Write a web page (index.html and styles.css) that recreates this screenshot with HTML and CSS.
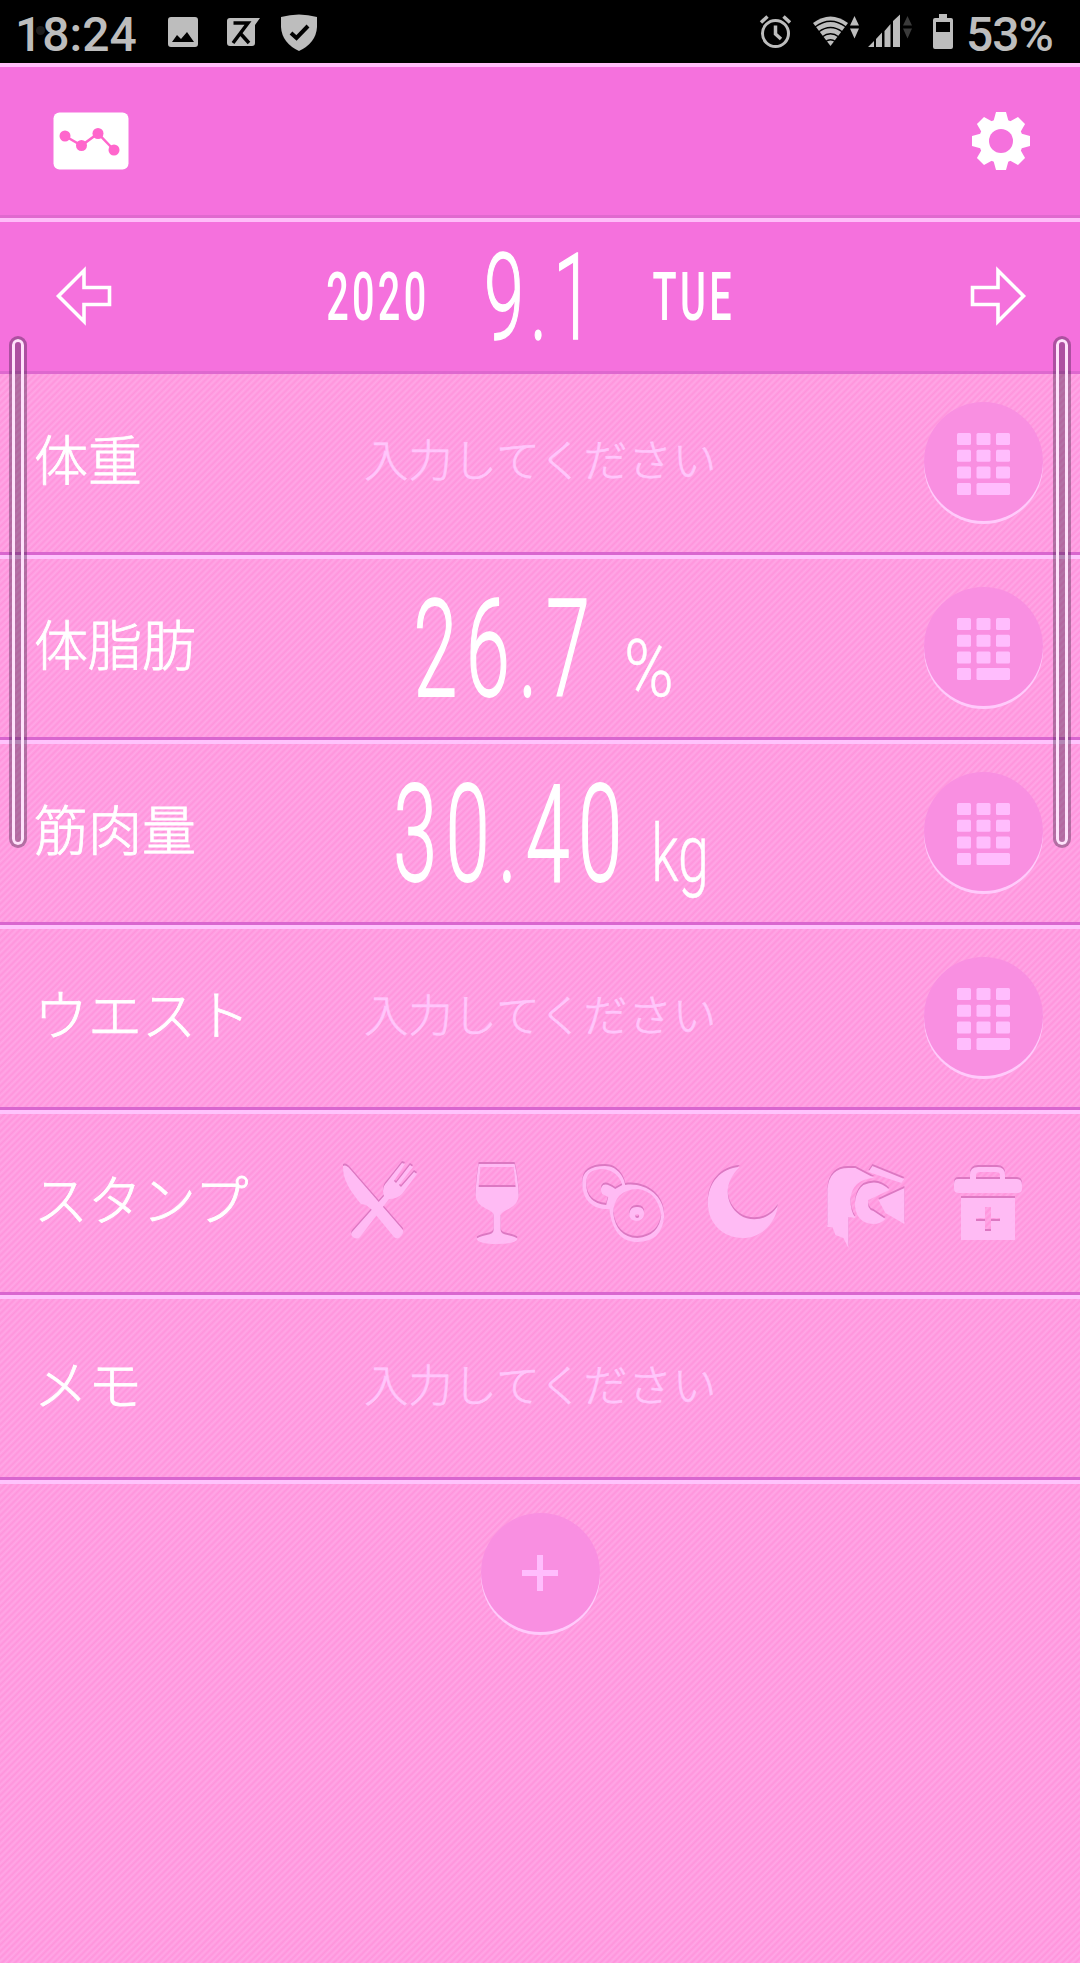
FILE: index.html
```html
<!DOCTYPE html>
<html lang="ja">
<head>
    <meta charset="UTF-8">
    <meta name="viewport" content="width=device-width, initial-scale=1.0">
    <title>体重記録</title>
    <link rel="stylesheet" href="styles.css">
</head>
<body>
    <!-- Shapes shared by several rows -->
    <svg class="defs" width="0" height="0">
        <defs>
            <symbol id="keypad" viewBox="0 0 54 62">
                <rect x="0" y="0" width="14" height="12" rx="1.5"/>
                <rect x="19.5" y="0" width="14" height="12" rx="1.5"/>
                <rect x="39" y="0" width="14" height="12" rx="1.5"/>
                <rect x="0" y="16.7" width="14" height="12" rx="1.5"/>
                <rect x="19.5" y="16.7" width="14" height="12" rx="1.5"/>
                <rect x="39" y="16.7" width="14" height="12" rx="1.5"/>
                <rect x="0" y="33.4" width="14" height="12" rx="1.5"/>
                <rect x="19.5" y="33.4" width="14" height="12" rx="1.5"/>
                <rect x="39" y="33.4" width="14" height="12" rx="1.5"/>
                <rect x="0" y="50" width="14" height="12" rx="1.5"/>
                <rect x="19.5" y="50" width="33.5" height="12" rx="1.5"/>
            </symbol>
            <symbol id="arrow" viewBox="0 0 58 60">
                <path d="M3.5 30 L29 4.500 V21.500 H54.500 V38.500 H29 V55.500 Z" fill="none" stroke="#fff" stroke-width="3.6"/>
            </symbol>
        </defs>
    </svg>

    <div class="status-bar">
        <span class="camera-dot"></span>
        <span class="clock">18:24</span>
        <svg class="status-left" width="160" height="63" viewBox="160 0 160 63" fill="#bdbdbd">
            <path fill-rule="evenodd" d="M171 17 H195 Q198 17 198 20 V44 Q198 47 195 47 H171 Q168 47 168 44 V20 Q168 17 171 17 Z M172 42 H194 L187 32 L181 39 L177 35 Z"/>
            <path d="M230 18 H260 L255 25 V43 Q255 46 252 46 H230 Q227 46 227 43 V21 Q227 18 230 18 Z"/>
            <path d="M233.500 23 H248 L233 43 M240 33 L249 43" fill="none" stroke="#000" stroke-width="3.500"/>
            <path d="M281 17 Q299 12 317 17 V27 Q316 43 299 51 Q282 43 281 27 Z"/>
            <path d="M291 33 L296.500 38 L308 26" fill="none" stroke="#000" stroke-width="4"/>
        </svg>
        <svg class="status-right" width="205" height="63" viewBox="755 0 205 63" fill="#bdbdbd">
            <g fill="none" stroke="#bdbdbd">
                <circle cx="775.500" cy="33.500" r="13" stroke-width="3"/>
                <path d="M775.500 25.500 V34 L781 39 M761 22.500 L767.500 16.500 M790 22.500 L783.500 16.500" stroke-width="3.500"/>
            </g>
            <path d="M813 23 Q830.500 10 848 23 L830.500 46 Z"/>
            <path d="M815 27 Q830.500 15.500 846 27 M818.500 32 Q830.500 23 842.500 32 M822 37 Q830.500 30.500 839 37 M825.500 41.500 Q830.500 38 835.500 41.500" fill="none" stroke="#000" stroke-width="1.300"/>
            <path d="M854.500 16 L859 25.500 H850 Z M850 28.500 H859 L854.500 38.500 Z"/>
            <path d="M868 47 L874 41 V47 Z M876 47 V39 L882 32.500 V47 Z M884.500 47 V31 L890.500 24 V47 Z M893 47 V21 L900 14.500 V47 Z"/>
            <path d="M907.500 16 L912 25.500 H903 Z M903 28.500 H912 L907.500 38.500 Z" fill="#3b3b3b"/>
            <path fill-rule="evenodd" d="M939 14 H947 V18 H951 Q953 18 953 20 V47 Q953 49 951 49 H935 Q933 49 933 47 V20 Q933 18 935 18 H939 Z M936 22 V32 H950 V22 Z"/>
        </svg>
        <span class="battery">53%</span>
    </div>

    <div class="toolbar">
        <svg width="76" height="58" viewBox="0 0 76 58">
            <rect x="0.500" y="0.500" width="75" height="57" rx="6" fill="#fff"/>
            <path d="M12 24 L28.500 33.500 L45 21.500 L61 38" fill="none" stroke="#ff66cc" stroke-width="2.500"/>
            <g fill="#ff66cc">
                <circle cx="12" cy="24" r="5.500"/>
                <circle cx="28.500" cy="33.500" r="5.500"/>
                <circle cx="45" cy="21.500" r="5.500"/>
                <circle cx="61" cy="38" r="5.500"/>
            </g>
        </svg>
        <svg width="58" height="58" viewBox="-29 -29 58 58">
            <g fill="#fff">
                <path id="tooth" d="M-8 -18 L-5 -29 H5 L8 -18 V18 L5 29 H-5 L-8 18 Z"/>
                <use href="#tooth" transform="rotate(45)"/>
                <use href="#tooth" transform="rotate(90)"/>
                <use href="#tooth" transform="rotate(135)"/>
                <circle r="22"/>
            </g>
            <circle r="12" fill="#f571dd"/>
        </svg>
    </div>

    <div class="date-bar">
        <svg width="58" height="60"><use href="#arrow"/></svg>
        <div class="date">
            <span class="date-side">2020</span>
            <span class="date-day">9.1</span>
            <span class="date-side">TUE</span>
        </div>
        <svg class="flip" width="58" height="60"><use href="#arrow"/></svg>
    </div>

    <div class="row">
        <span class="label">体重</span>
        <span class="placeholder">入力してください</span>
        <span class="round"><svg width="54" height="62"><use href="#keypad"/></svg></span>
    </div>
    <div class="row">
        <span class="label">体脂肪</span>
        <div class="reading"><span class="number">26.7</span><span class="unit percent">%</span></div>
        <span class="round"><svg width="54" height="62"><use href="#keypad"/></svg></span>
    </div>
    <div class="row">
        <span class="label">筋肉量</span>
        <div class="reading"><span class="number">30.40</span><span class="unit kilo">kg</span></div>
        <span class="round"><svg width="54" height="62"><use href="#keypad"/></svg></span>
    </div>
    <div class="row">
        <span class="label">ウエスト</span>
        <span class="placeholder">入力してください</span>
        <span class="round"><svg width="54" height="62"><use href="#keypad"/></svg></span>
    </div>
    <div class="row">
        <span class="label">スタンプ</span>
        <div class="stamps">
            <!-- knife and fork -->
            <svg width="86" height="90" viewBox="337 1158 86 90">
                <path d="M343 1165 Q346 1163 350 1168 L377 1199 L403 1229 Q404 1233 399 1237 Q396 1238 394 1236 L371 1208 L366 1204 L361 1203 C351 1191 342 1178 343 1165 Z"/>
                <path d="M352 1231 L384 1195 Q381 1187 387 1181 L402 1162 L405 1163 L394 1180 L396 1182 L410 1164 L413 1166 L399 1184 L401 1186 L414 1171 L417 1173 L402 1193 Q397 1198 389 1198 L360 1236 Q357 1239 353 1236 Q350 1234 352 1231 Z"/>
            </svg>
            <!-- wine glass -->
            <svg width="86" height="90" viewBox="458.400 1158 86 90">
                <path fill-rule="evenodd" d="M479 1163 H515 C518 1176 519 1187 519 1194 Q519 1203 509 1208 Q502 1211 501 1214 V1229 Q501 1233 508 1234 Q517 1236 518 1238 Q516 1243 497 1243 Q479 1243 477 1238 Q478 1236 487 1234 Q494 1233 494 1229 V1214 Q494 1211 487 1208 Q476 1203 476 1194 C476 1187 477 1176 479 1163 Z M481 1166 L479 1186 H516 L514 1166 Z"/>
            </svg>
            <!-- dumbbell -->
            <svg width="86" height="90" viewBox="579.800 1158 86 90">
                <path fill-rule="evenodd" d="M605 1165 C617 1165 624 1176 625 1184 C643 1181 664 1193 664 1215 Q662 1241 637 1241 C623 1241 612 1232 609 1208 C595 1209 582 1201 582 1182 Q582 1165 605 1165 Z M603 1168 Q585 1168 586 1183 Q586 1202 606 1204 L608 1196 L602 1193 Q599 1187 603 1184 Q607 1182 615 1188 L622 1184 Q618 1170 603 1168 Z M637 1188 Q614 1189 613 1212 Q616 1236 637 1237 Q659 1235 661 1214 Q657 1190 637 1188 Z"/>
                <path fill-rule="evenodd" d="M636 1206 Q644 1205 644 1213 Q643 1220 636 1220 Q629 1219 629 1213 Q630 1206 636 1206 Z M637 1213 A2 2 0 1 0 637 1217 A2 2 0 1 0 637 1213 Z"/>
            </svg>
            <!-- moon -->
            <svg width="86" height="90" viewBox="701.200 1158 86 90">
                <path d="M740 1166 C722 1183 726 1204 740 1214 C752 1222 769 1219 778 1205 C775 1225 759 1237 743 1237 C723 1237 708 1222 708 1202 C708 1182 721 1167 740 1166 Z"/>
            </svg>
            <!-- toilet roll -->
            <svg width="86" height="90" viewBox="822.600 1158 86 90">
                <path d="M827 1226 V1188 Q829 1167 848 1167 H855 L874 1177 Q852 1178 850 1198 Q850 1210 855 1217 L848 1216 V1247 L843 1237 L835 1234 L832 1226 Z"/>
                <path d="M872 1165 L904 1178 L901 1182 L868 1171 Z"/>
                <path d="M889 1189 L868 1199 Q866 1208 873 1210 L885 1218 C878 1226 862 1224 857 1214 C852 1204 855 1190 863 1184 Q878 1177 889 1189 Z"/>
                <path d="M904 1187 L878 1199 L885 1212 L904 1223 Z"/>
            </svg>
            <!-- medicine box -->
            <svg width="86" height="90" viewBox="943 1158 86 90">
                <path fill-rule="evenodd" d="M957 1178 H969 V1174 Q969 1166 977 1166 H996 Q1004 1166 1004 1174 V1178 H1016 Q1021 1178 1021 1184 V1188 Q1021 1192 1016 1192 H958 Q953 1192 953 1188 V1183 Q953 1178 957 1178 Z M975 1178 H999 V1173 Q998 1171 995 1171 H979 Q975 1171 975 1174 Z"/>
                <path fill-rule="evenodd" d="M960 1197 H1014 V1239 H960 Z M984 1206 V1217 H975 V1220 H984 V1230 H990 V1220 H999 V1217 H990 V1206 Z"/>
            </svg>
        </div>
    </div>
    <div class="row">
        <span class="label">メモ</span>
        <span class="placeholder">入力してください</span>
    </div>

    <div class="add">
        <span class="round"><svg width="36" height="36"><path d="M15 0 H21 V15 H36 V21 H21 V36 H15 V21 H0 V15 H15 Z"/></svg></span>
    </div>

    <div class="handle handle-left"></div>
    <div class="handle handle-right"></div>
</body>
</html>
```
FILE: styles.css
```css
* {
    box-sizing: border-box;
}
body {
    margin: 0;
    min-height: 1963px;
    position: relative;
    overflow-x: hidden;
    color: #fff;
    font-family: "Noto Sans CJK JP", sans-serif;
    background: repeating-linear-gradient(135deg, #ff94dc 0, #ffa7e6 2.3px, #ff94dc 4.6px);
}
svg {
    display: block;
    flex-shrink: 0;
}
.defs {
    position: absolute;
}

/* Phone status bar */
.status-bar {
    height: 63px;
    display: flex;
    align-items: center;
    position: relative;
    background: #000;
    color: #bdbdbd;
    font-family: Roboto, sans-serif;
    font-size: 48px;
    font-weight: 500;
    line-height: 63px;
    padding: 5px 27px 0 15px;
}
.status-bar svg {
    margin-top: -5px;
}
.camera-dot {
    position: absolute;
    left: 36px;
    top: 26px;
    width: 9px;
    height: 9px;
    border-radius: 50%;
    background: #1d1d1d;
}
.clock {
    width: 145px;
    position: relative;
}
.status-right {
    margin-left: auto;
}
.battery {
    width: 93px;
    padding-left: 6px;
    letter-spacing: -1px;
}

/* Header */
.toolbar {
    height: 155px;
    display: flex;
    justify-content: space-between;
    align-items: center;
    padding: 0 50px 1px 53px;
    background: #f571dd;
    border-top: 4px solid #ffbdf6;
    border-bottom: 3px solid #e069cf;
}
.date-bar {
    height: 156px;
    display: flex;
    justify-content: space-between;
    align-items: center;
    padding: 0 53px 2px 55px;
    background: #f571dd;
    border-top: 4px solid #ffbdf9;
    border-bottom: 3px solid #de68cf;
}
.flip {
    transform: scaleX(-1);
}
.date {
    display: flex;
    align-items: center;
    white-space: nowrap;
    font-family: Roboto, sans-serif;
    line-height: 140px;
    transform: translate(-10px, 2px) scaleX(0.6);
}
.date-side {
    font-size: 66px;
    font-weight: 500;
    letter-spacing: 5.500px;
}
.date-day {
    font-size: 120px;
    font-weight: 300;
    letter-spacing: 10px;
    margin: 0 89px 0 91px;
    -webkit-text-stroke: 1.500px #fff;
}

/* Rows */
.row {
    height: 185px;
    display: grid;
    grid-template-columns: 314px 452px 314px;
    grid-template-rows: 100%;
    align-items: center;
    border-bottom: 4px solid #ffc3fc;
    box-shadow: inset 0 -3px 0 #d966cf;
    padding-bottom: 3px;
}
.label {
    padding-left: 34px;
    font-size: 54px;
    font-weight: 300;
    line-height: 80px;
    margin-top: -11px;
    white-space: nowrap;
    -webkit-text-stroke: 0.800px #fff;
}
.placeholder {
    text-align: center;
    font-size: 44px;
    font-weight: 300;
    line-height: 66px;
    letter-spacing: 0.400px;
    margin: -11px 0 0 1px;
    white-space: nowrap;
    color: #ffc6fb;
    -webkit-text-stroke: 0.600px #ffc6fb;
}
.reading {
    display: flex;
    justify-content: center;
    align-items: baseline;
    white-space: nowrap;
    font-family: Roboto, sans-serif;
    font-weight: 300;
    line-height: 140px;
    padding-top: 22px;
    transform: scaleX(0.58);
}
.number {
    font-size: 136px;
    letter-spacing: 15px;
    -webkit-text-stroke: 1.800px #fff;
}
.unit {
    font-size: 80px;
    transform-origin: left;
    -webkit-text-stroke: 0.500px #fff;
}
.percent {
    margin: 0 14px 0 44px;
    transform: scaleX(1.45);
}
.kilo {
    margin: 0 -22px 0 36px;
    transform: scaleX(1.2);
}
.round {
    width: 119px;
    height: 119px;
    display: flex;
    justify-content: center;
    align-items: center;
    justify-self: end;
    margin: -4px 37px 0 0;
    padding-top: 5px;
    border-radius: 50%;
    background: #f98fe1;
    box-shadow: 0 3px 0 #ffcafb;
    fill: #ffbdfd;
}

/* Pressed-in stamp icons */
.stamps {
    grid-column: 2 / 4;
    display: flex;
    justify-content: space-between;
    padding: 1px 50px 0 23px;
    fill: #ffbbf4;
}
.stamps svg {
    overflow: visible;
    filter: drop-shadow(0 -2px 0 #dc78c2);
}

.add {
    display: flex;
    justify-content: center;
    padding-top: 29px;
}
.add .round {
    margin: 0;
    padding: 0;
}

/* Edge panel handles */
.handle {
    position: absolute;
    top: 336px;
    width: 18px;
    height: 512px;
    border: 3px solid rgba(40, 20, 50, 0.35);
    border-radius: 9px;
    box-shadow: inset 0 0 0 3px #ffe2fb;
    background: rgba(40, 20, 50, 0.35);
    background-clip: padding-box;
}
.handle-left {
    left: 9px;
}
.handle-right {
    left: 1053px;
}
```
